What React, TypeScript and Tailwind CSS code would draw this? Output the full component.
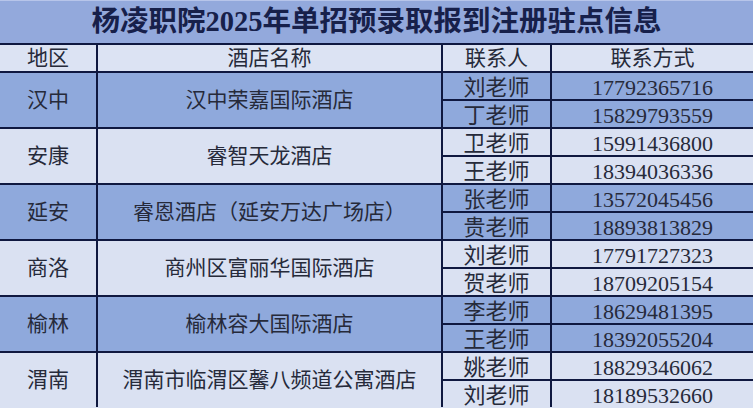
import React from "react";

const rows = [
  { region: "汉中", hotel: "汉中荣嘉国际酒店", c: [["刘老师", "17792365716"], ["丁老师", "15829793559"]], dark: true },
  { region: "安康", hotel: "睿智天龙酒店", c: [["卫老师", "15991436800"], ["王老师", "18394036336"]], dark: false },
  { region: "延安", hotel: "睿恩酒店（延安万达广场店）", c: [["张老师", "13572045456"], ["贵老师", "18893813829"]], dark: true },
  { region: "商洛", hotel: "商州区富丽华国际酒店", c: [["刘老师", "17791727323"], ["贺老师", "18709205154"]], dark: false },
  { region: "榆林", hotel: "榆林容大国际酒店", c: [["李老师", "18629481395"], ["王老师", "18392055204"]], dark: true },
  { region: "渭南", hotel: "渭南市临渭区馨八频道公寓酒店", c: [["姚老师", "18829346062"], ["刘老师", "18189532660"]], dark: false },
];

const cjk = { fontFamily: '"Liberation Serif", "Noto Sans CJK SC", serif' };

export default function App() {
  return (
    <div className="w-[753px] h-[408px] overflow-hidden bg-[#dae1f2]">
      <div
        className="grid grid-cols-[96px_343px_107px_1fr] gap-[2px] bg-[#0f1840] text-[#262a3a] text-[21px] leading-none"
        style={cjk}
      >
        <div className="col-span-4 h-[43px] bg-[#93a9dc] border-t border-[#b7c5ea] flex items-center justify-center font-bold text-[28.5px] text-[#17204a]">
          杨凌职院2025年单招预录取报到注册驻点信息
        </div>
        {["地区", "酒店名称", "联系人", "联系方式"].map((h) => (
          <div key={h} className="h-[26px] bg-[#dce3f3] flex items-center justify-center pt-[1px]">
            {h}
          </div>
        ))}
        {rows.map((r) => {
          const bg = r.dark ? "bg-[#8fa9dc]" : "bg-[#dae1f2]";
          return (
            <React.Fragment key={r.region}>
              <div className={`row-span-2 ${bg} flex items-center justify-center`}>{r.region}</div>
              <div className={`row-span-2 ${bg} flex items-center justify-center`}>{r.hotel}</div>
              <div className={`h-[26px] ${bg} flex items-center justify-center pt-[3px] text-[22px]`}>{r.c[0][0]}</div>
              <div className={`h-[26px] ${bg} flex items-center justify-center pt-[3px] text-[22px]`}>{r.c[0][1]}</div>
              <div className={`h-[26px] ${bg} flex items-center justify-center pt-[3px] text-[22px]`}>{r.c[1][0]}</div>
              <div className={`h-[26px] ${bg} flex items-center justify-center pt-[3px] text-[22px]`}>{r.c[1][1]}</div>
            </React.Fragment>
          );
        })}
      </div>
    </div>
  );
}
